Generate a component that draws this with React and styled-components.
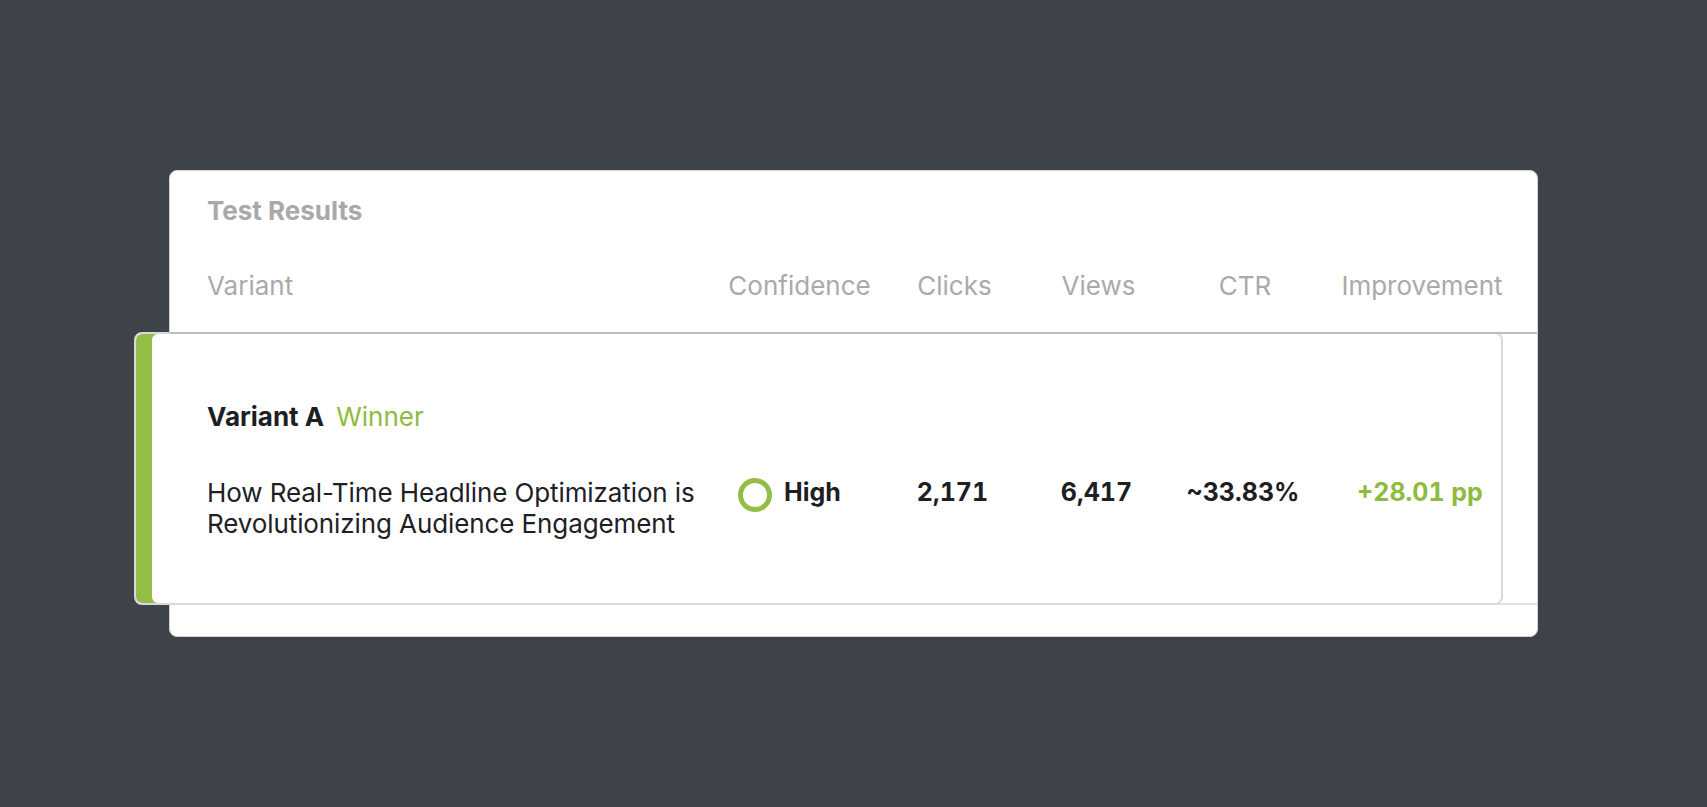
import React from "react"
import styled, { createGlobalStyle } from "styled-components"

const GlobalStyle = createGlobalStyle`
  html, body {
    margin: 0;
    padding: 0;
    background: #3e4249;
  }
  body {
    font-family: Inter, "Noto Sans", sans-serif;
    -webkit-font-smoothing: antialiased;
  }
`

const COLUMNS = "1fr 123px 187px 101px 192px 162px"
const GREEN = "#93bd44"

const Page = styled.div`
  height: 100vh;
  display: flex;
  align-items: center;
  justify-content: center;
`

const Card = styled.section`
  width: 1369px;
  box-sizing: border-box;
  background: #fff;
  border: 1px solid #cfd2d6;
  border-radius: 8px;
  padding: 25px 0 31px;
`

const Title = styled.h2`
  margin: 0;
  padding: 0 34px 0 37px;
  font-size: 26px;
  line-height: 30px;
  font-weight: 700;
  color: #a9a9a9;
`

const HeadRow = styled.div`
  position: relative;
  z-index: 1;
  display: grid;
  grid-template-columns: ${COLUMNS};
  padding: 45px 34px 31px 37px;
  border-bottom: 2px solid #bdbec0;
  font-size: 26px;
  line-height: 30px;
  color: #aaaaaa;
`

const Cell = styled.div`
  display: flex;
  align-items: center;
  justify-content: ${p => (p.$left ? "flex-start" : "center")};
  gap: 12px;
  white-space: nowrap;
  font-weight: ${p => (p.$bold ? 700 : 400)};
  color: ${p => p.$color || "inherit"};
`

const Value = styled(Cell)`
  height: 31px;
  font-size: 25px;
  font-variant-numeric: tabular-nums;
  padding-left: ${p => (p.$left ? "2px" : "0")};
`

const RowWrap = styled.div`
  margin-top: -2px;
  border-bottom: 2px solid #dfe1e5;
`

const Highlight = styled.div`
  margin: 0 34px -2px -36px;
  background: #fff;
  border: 2px solid #d6d9dd;
  border-radius: 8px;
  box-shadow: inset 16px 0 0 ${GREEN};
  padding: 68px 0 64px 71px;
  color: #1c2024;
`

const Label = styled.div`
  display: flex;
  align-items: baseline;
  gap: 12px;
  font-size: 26px;
  line-height: 30px;
`

const Name = styled.span`
  font-weight: 700;
`

const Badge = styled.span`
  color: #8dbb3d;
`

const Body = styled.div`
  display: grid;
  grid-template-columns: ${COLUMNS};
  align-items: start;
  margin-top: 45px;
  font-size: 26px;
  line-height: 31px;
`

const Headline = styled.div`
  color: #1d2125;
  letter-spacing: -0.1px;
`

const Ring = styled.span`
  align-self: flex-start;
  width: 34px;
  height: 34px;
  box-sizing: border-box;
  border: 5px solid ${GREEN};
  border-radius: 50%;
  margin-top: 1px;
  flex: none;
`

const headers = ["Confidence", "Clicks", "Views", "CTR", "Improvement"]

export default function App() {
  return (
    <Page>
      <GlobalStyle />
      <Card>
        <Title>Test Results</Title>
        <HeadRow>
          <Cell $left>Variant</Cell>
          {headers.map(h => (
            <Cell key={h}>{h}</Cell>
          ))}
        </HeadRow>
        <RowWrap>
          <Highlight>
            <Label>
              <Name>Variant A</Name>
              <Badge>Winner</Badge>
            </Label>
            <Body>
              <Headline>
                How Real-Time Headline Optimization is Revolutionizing Audience Engagement
              </Headline>
              <Value $bold $left>
                <Ring />
                High
              </Value>
              <Value $bold>2,171</Value>
              <Value $bold>6,417</Value>
              <Value $bold>~33.83%</Value>
              <Value $bold $color="#8dbb3d">+28.01 pp</Value>
            </Body>
          </Highlight>
        </RowWrap>
      </Card>
    </Page>
  )
}
